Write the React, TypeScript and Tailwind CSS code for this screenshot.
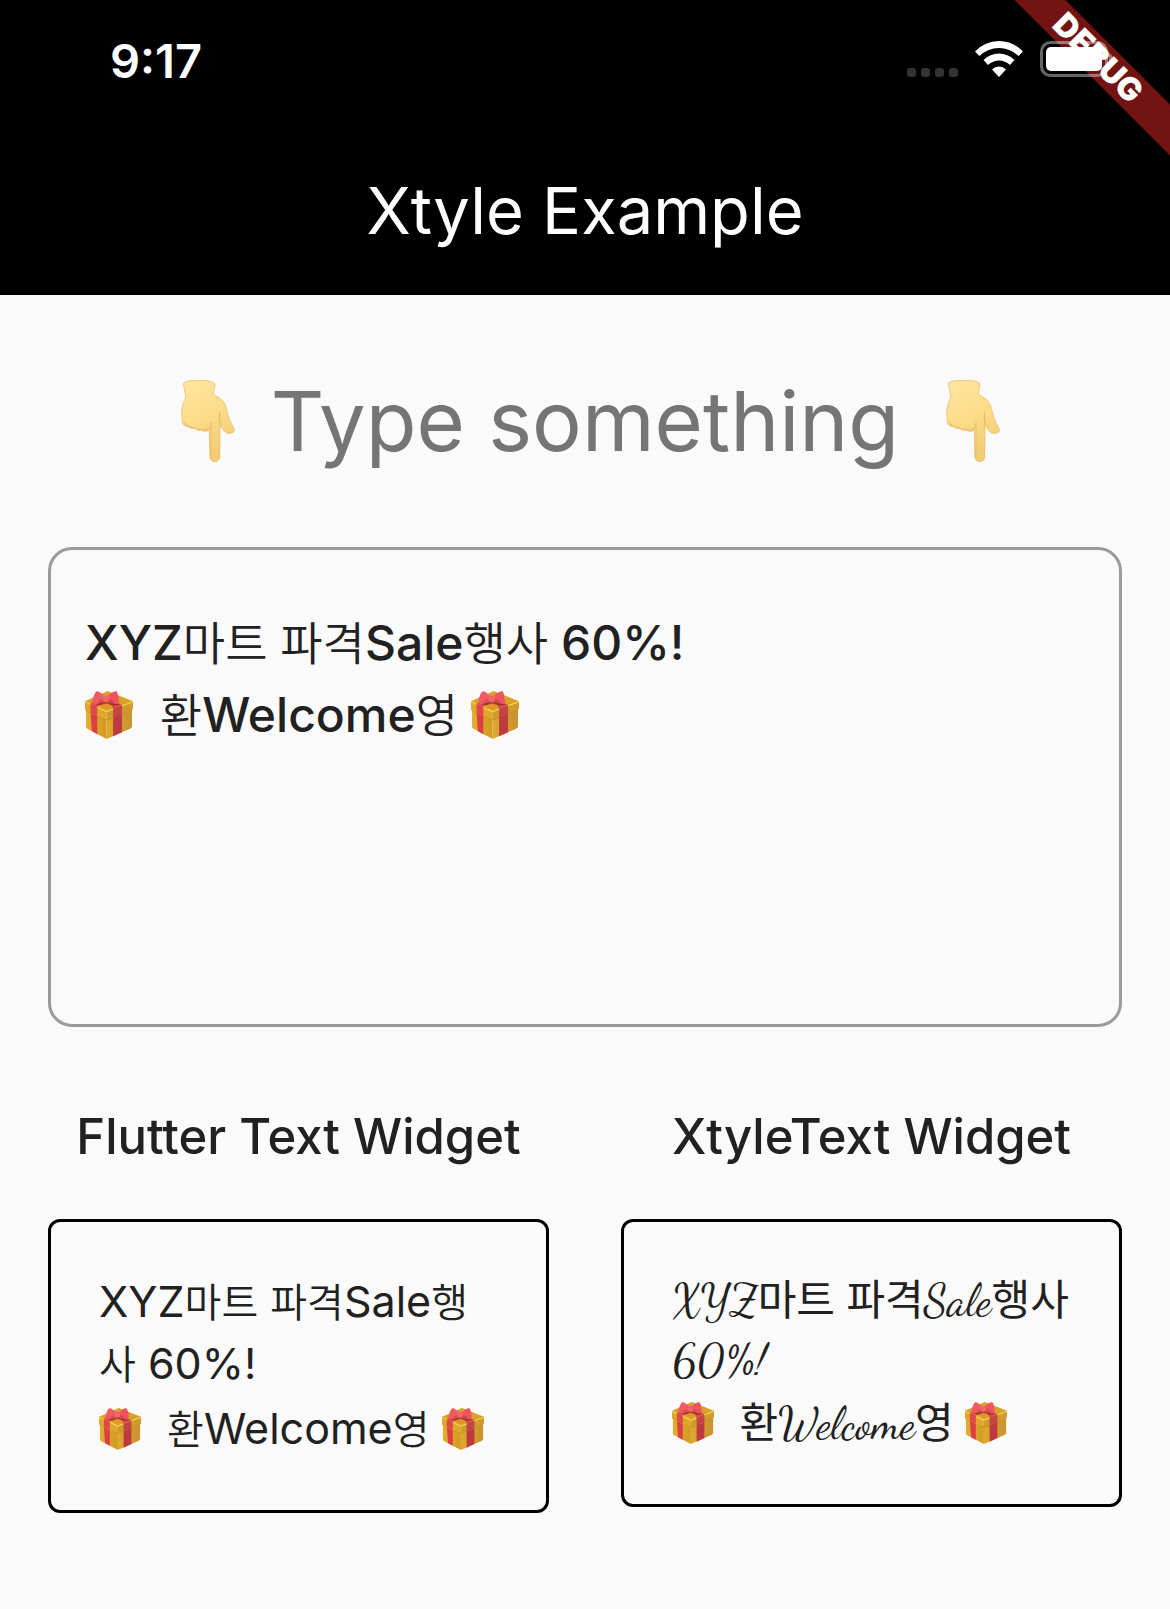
import { useState } from "react";

const INITIAL = "XYZ마트 파격Sale행사 60%!\n🎁 환Welcome영 🎁";

function Gift({ className }: { className: string }) {
  return (
    <svg viewBox="54 38 140 142" preserveAspectRatio="none" className={className} role="img" aria-label="gift">
      <defs>
        <linearGradient id="giftLeft" x1="0" x2="1">
          <stop offset="0" stopColor="#e3ac33" />
          <stop offset="1" stopColor="#d39a22" />
        </linearGradient>
        <linearGradient id="giftRight" x1="0" x2="1">
          <stop offset="0" stopColor="#dda92f" />
          <stop offset="1" stopColor="#c8922f" />
        </linearGradient>
      </defs>
      <path d="M57 90 117 118V180L61 150Q57 148 57 144Z" fill="url(#giftLeft)" />
      <path d="M117 118 191 88V142Q191 146 187 149L117 180Z" fill="url(#giftRight)" />
      <path d="M70 95 90 104V166L74 157Z" fill="#dc3f42" />
      <path d="M136 110 162 99V160L136 172Z" fill="#bd3b3f" />
      <path d="M57 92 117 121 191 91V95L117 126 57 97Z" fill="#a86f14" opacity=".4" />
      <path d="M54 68 120 38 194 68 117 99Z" fill="#d9a128" />
      <path d="M92 76 118 66 146 78 116 91Z" fill="#e8912c" />
      <path d="M54 68 117 97V124L58 97Q54 95 54 91Z" fill="#e0a82a" />
      <path d="M117 97 194 68V88Q194 92 190 94L117 124Z" fill="#cf9a2e" />
      <path d="M54 68 117 97 194 68V71L117 101 54 71Z" fill="#f6d44a" />
      <path d="M70 75 90 84V111L70 102Z" fill="#e0474a" />
      <path d="M136 90 162 80V106L136 117Z" fill="#c64347" />
      <path d="M70 75 84 68 106 76 90 84Z" fill="#e34c4e" />
      <path d="M128 75 144 69 162 80 136 90Z" fill="#d84a4e" />
      <path d="M78 76Q96 68 106 70L124 70Q140 72 156 78L136 81 116 75 98 80Z" fill="#7d2419" opacity=".65" />
      <path d="M110 54C103 45 93 37 88 39 82 43 76 60 76 71 78 78 88 77 95 74Q103 70 110 70Z" fill="#f05a62" />
      <path d="M119 54C128 44 140 37 146 39 150 44 153 60 153 71 151 78 143 77 136 74Q127 70 119 70Z" fill="#ee545d" />
      <path d="M108 62Q98 62 88 71L95 72Q103 69 109 69Z" fill="#cf3d46" opacity=".6" />
      <path d="M121 62Q132 62 142 72L135 72Q127 69 120 69Z" fill="#c53742" opacity=".6" />
      <rect x="106" y="51" width="18" height="22" rx="7" fill="#f2656b" />
      <path d="M107 67Q115 76 123 67V70Q115 78 108 71Z" fill="#b5353c" />
    </svg>
  );
}

function Hand() {
  return (
    <svg viewBox="66 62 161 247" className="ml-[11px] h-[82px] w-[54px] shrink-0" role="img" aria-label="pointing down">
      <defs>
        <linearGradient id="skin" x1="0" y1="0" x2="0.3" y2="1">
          <stop offset="0" stopColor="#ffe79f" />
          <stop offset=".55" stopColor="#fbdc89" />
          <stop offset="1" stopColor="#f2cc72" />
        </linearGradient>
      </defs>
      <path
        d="M72 74Q74 63 118 63 164 63 168 75 164 90 163 105 188 117 198 135C206 158 209 184 223 204Q229 212 224 219 216 225 203 222C193 217 187 206 183 193L182 293Q181 307 167 308 153 307 152 293L150 210Q144 222 126 213 116 217 106 208 96 211 88 203 70 202 69 188 65 150 71 136 75 122 79 115 77 90 72 74Z"
        fill="url(#skin)"
        stroke="#e3b566"
        strokeWidth="2"
        strokeLinejoin="round"
      />
      <path d="M150 209Q155 202 156 188V292" fill="none" stroke="#dfae5c" strokeWidth="3" opacity=".5" />
      <path d="M183 193Q180 180 181 162" fill="none" stroke="#dba654" strokeWidth="3.5" strokeLinecap="round" opacity=".7" />
      <path d="M74 187Q77 198 88 200 97 207 105 205 115 213 126 210 142 218 148 207" fill="none" stroke="#e5b663" strokeWidth="4" opacity=".6" />
    </svg>
  );
}

type RichTextProps = {
  text: string;
  gift: string;
  hangul: string;
  latin: string;
  line: string;
  giftLine: string;
};

function RichText({ text, gift, hangul, latin, line, giftLine }: RichTextProps) {
  return (
    <>
      {text.split("\n").map((row, r) => (
        <span key={r} className={row.includes("🎁") ? giftLine : line}>
          {row.split(/(🎁|[가-힣]|\s)/u).filter(Boolean).map((part, i) => {
            if (part === "🎁") return <Gift key={i} className={gift} />;
            return (
              <span key={i} className={/^[가-힣]/.test(part) ? hangul : latin}>
                {part}
              </span>
            );
          })}
        </span>
      ))}
    </>
  );
}

function StatusBar() {
  return (
    <div className="flex h-[127px] items-start justify-between pt-8 pr-14 pl-[110px]">
      <span className="text-[47px] leading-[58px] font-semibold">9:17</span>
      <div className="relative z-20 flex items-center gap-[17px] pt-[9px]">
        <div className="mt-6 flex gap-[5px] self-start pt-[3px]">
          {[0, 1, 2, 3].map((n) => (
            <span key={n} className="size-[9px] rounded-[3px] bg-[#333333]" />
          ))}
        </div>
        <svg viewBox="0 0 48 36" className="h-9 w-12" aria-label="Wi-Fi" role="img">
          <path d="M0 10.5Q10 0 24 0T48 10.5L43.500 15Q35 7 24 7T4.500 15Z" fill="#fff" strokeLinejoin="round" />
          <path d="M8.500 19Q15 12.500 24 12.500T39.500 19L35 24Q30 19.500 24 19.500T13 24Z" fill="#fff" />
          <path d="M17 28.500Q20 25.500 24 25.500T31 28.500L24 36Z" fill="#fff" />
        </svg>
        <svg viewBox="0 0 74 36" className="h-9 w-[74px]" aria-label="Battery" role="img">
          <rect x="1.500" y="1.500" width="65" height="33" rx="9" fill="none" stroke="#fff" strokeOpacity=".4" strokeWidth="3" />
          <rect x="6" y="6" width="56" height="24" rx="5" fill="#fff" />
          <path d="M69 12Q73 14 73 18T69 24Z" fill="#fff" fillOpacity=".4" />
        </svg>
      </div>
    </div>
  );
}

export default function App() {
  const [text, setText] = useState(INITIAL);
  return (
    <div className="min-h-screen bg-[#fafafa] font-['Inter','Noto_Sans_CJK_KR',sans-serif] text-[#212121]">
      <header className="relative overflow-hidden bg-black text-white">
        <div className="absolute top-0 right-0 size-[156px] overflow-hidden">
          <div className="absolute top-10 -left-14 h-9 w-[280px] rotate-45 bg-[#731414] text-center text-[32px] leading-9 font-black">
            DEBUG
          </div>
        </div>
        <StatusBar />
        <h1 className="flex h-[168px] items-center justify-center text-[65px] leading-[72px] font-normal">Xtyle Example</h1>
      </header>

      <main className="px-12 pt-[66px] pb-24">
        <label htmlFor="source" className="flex items-center justify-center gap-9 text-[83px] leading-[120px] text-[#757575]">
          <Hand />
          Type something
          <Hand />
        </label>

        <div className="relative mt-[66px]">
          <div
            aria-hidden="true"
            className="pointer-events-none absolute inset-0 overflow-hidden border-[3px] border-transparent px-[34px] py-[57px] text-[48px] leading-[72px] font-medium break-words whitespace-pre-wrap"
          >
            <RichText
              text={text}
              gift="mr-3.5 inline-block size-12 align-[-7px]"
              hangul="text-[46px] leading-none font-[350]"
              latin="leading-none"
              line="block min-h-[72px]"
              giftLine="block min-h-[72px]"
            />
          </div>
          <textarea
            id="source"
            rows={5}
            spellCheck={false}
            value={text}
            onChange={(e) => setText(e.target.value)}
            className="relative block w-full resize-none rounded-3xl border-[3px] border-[#9b9b9b] bg-transparent px-[34px] py-[57px] text-[48px] leading-[72px] font-medium text-transparent caret-[#212121] outline-none"
          />
        </div>

        <div className="mt-[78px] grid grid-cols-2 items-start gap-[72px]">
          <section>
            <h2 className="text-center text-[49px] leading-[64px] font-medium">Flutter Text Widget</h2>
            <p className="mt-[50px] rounded-xl border-[3px] border-black p-12 text-[43px] break-all whitespace-pre-wrap">
              <RichText
                text={text}
                gift="mr-3.5 inline-block size-[42px] align-[-6px]"
                hangul="text-[40px] leading-none font-[350]"
                latin="leading-none"
                line="block leading-[62px]"
                giftLine="block leading-[68px]"
              />
            </p>
          </section>
          <section>
            <h2 className="text-center text-[49px] leading-[64px] font-medium">XtyleText Widget</h2>
            <p className="mt-[50px] rounded-xl border-[3px] border-black p-12 text-[42px] break-keep whitespace-pre-wrap">
              <RichText
                text={text}
                gift="mr-3.5 inline-block size-[42px] align-[-6px]"
                hangul="leading-none"
                latin="font-['Dancing_Script','Liberation_Serif',serif] text-[44px] leading-none"
                line="block leading-[60px]"
                giftLine="block leading-[66px]"
              />
            </p>
          </section>
        </div>
      </main>
    </div>
  );
}
